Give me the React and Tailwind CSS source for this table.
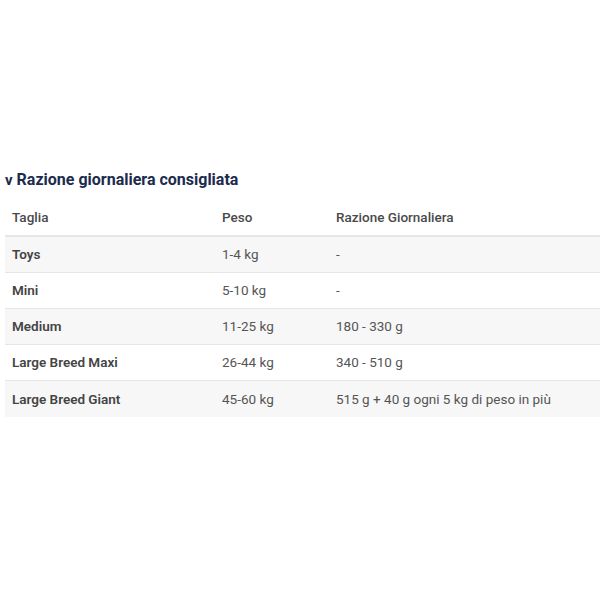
import React from "react";

const rows = [
  ["Toys", "1-4 kg", "-"],
  ["Mini", "5-10 kg", "-"],
  ["Medium", "11-25 kg", "180 - 330 g"],
  ["Large Breed Maxi", "26-44 kg", "340 - 510 g"],
  ["Large Breed Giant", "45-60 kg", "515 g + 40 g ogni 5 kg di peso in più"],
];

export default function App() {
  return (
    <div className="w-[600px] h-[600px] bg-white" style={{ fontFamily: "Roboto, 'Liberation Sans', sans-serif" }}>
      <div className="pt-[169px]">
        <div className="flex items-center h-[22px] pl-[5px] text-[#1c2b4c] font-bold text-[16px]">
          <span className="text-[15px] mr-[4px] font-bold">v</span>
          <span>Razione giornaliera consigliata</span>
        </div>
        <div className="ml-[5px] mt-[9px]">
          <div className="flex h-[37px] items-center border-b-2 border-[#e6e6e6] text-[13.5px] font-medium text-[#4a4a4a]">
            <div className="w-[210px] pl-[7px]">Taglia</div>
            <div className="w-[114px] pl-[7px]">Peso</div>
            <div className="flex-1 pl-[7px]">Razione Giornaliera</div>
          </div>
          {rows.map((r, i) => (
            <div
              key={i}
              className={`flex h-[36px] items-center text-[13.5px] ${i < rows.length - 1 ? "border-b border-[#e6e6e6]" : ""} ${i % 2 === 0 ? "bg-[#f7f7f7]" : "bg-white"}`}
            >
              <div className="w-[210px] pl-[7px] font-semibold text-[#444]">{r[0]}</div>
              <div className="w-[114px] pl-[7px] text-[#555]">{r[1]}</div>
              <div className="flex-1 pl-[7px] text-[#555]">{r[2]}</div>
            </div>
          ))}
        </div>
      </div>
    </div>
  );
}
